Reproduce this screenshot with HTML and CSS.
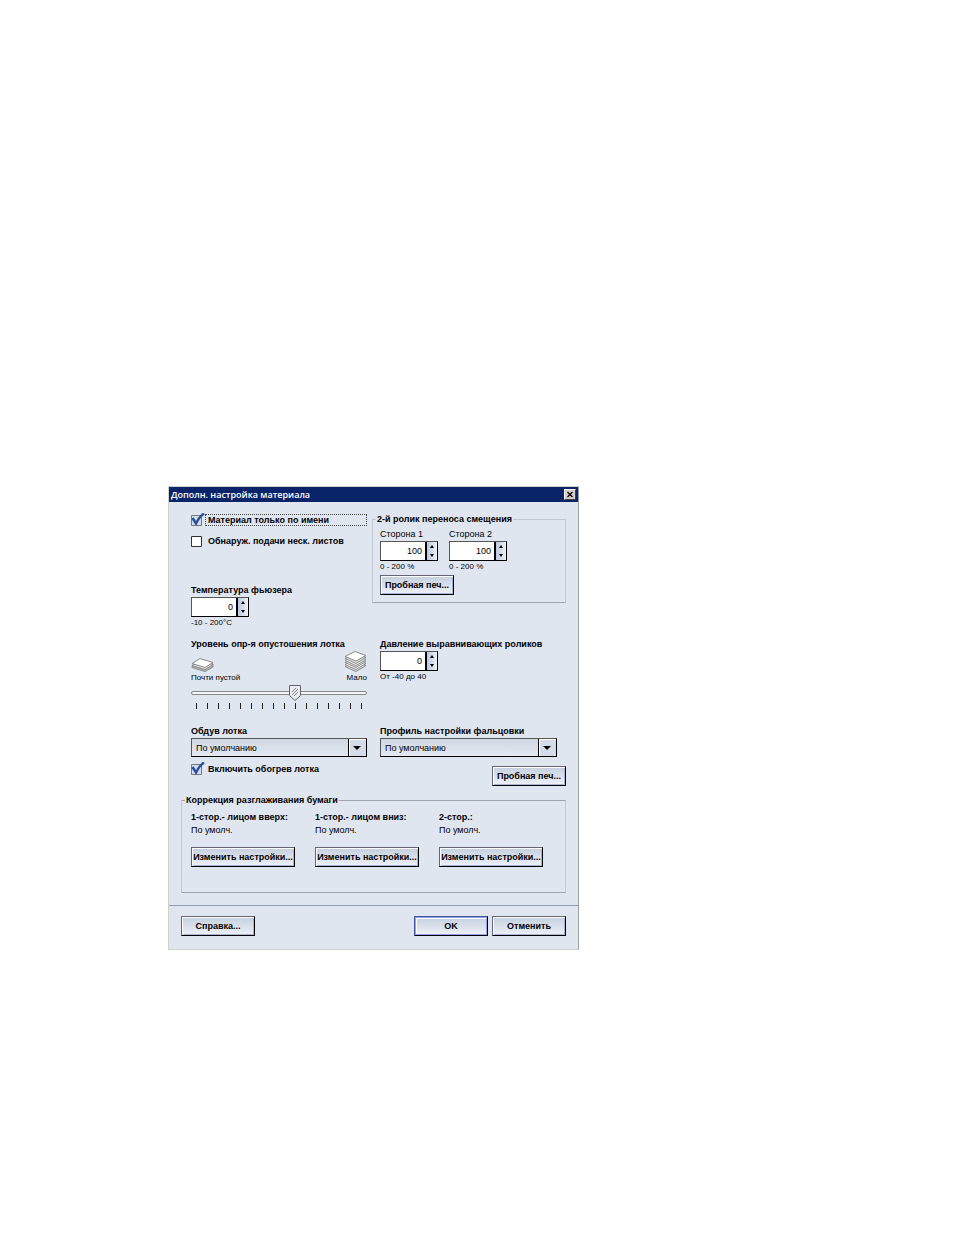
FILE: index.html
```
<!DOCTYPE html>
<html lang="ru">
<head>
    <meta charset="UTF-8">
    <meta name="viewport" content="width=device-width, initial-scale=1.0">
    <title>Дополн. настройка материала</title>
    <link rel="stylesheet" href="styles.css">
</head>
<body>
    <form class="dialog">
        <header class="titlebar">
            <h1 class="title">Дополн. настройка материала</h1>
            <button class="close" type="button" aria-label="Закрыть">
                <svg width="8" height="7" viewBox="0 0 8 7"><path d="M1.500 1L6.500 6M6.500 1L1.500 6" stroke="#000" stroke-width="1.2"/></svg>
            </button>
        </header>

        <main class="content">
            <div class="row">
                <section class="left">
                    <div class="check check-first">
                        <input type="checkbox" id="by-name" checked>
                        <label class="focused" for="by-name">Материал только по имени</label>
                    </div>
                    <div class="check">
                        <input type="checkbox" id="multi-feed">
                        <label for="multi-feed">Обнаруж. подачи неск. листов</label>
                    </div>
                    <div class="field fuser">
                        <label class="label" for="fuser">Температура фьюзера</label>
                        <div class="spinner">
                            <input type="text" id="fuser" value="0">
                            <div class="steps">
                                <button type="button" class="up" aria-label="Больше"></button>
                                <button type="button" class="down" aria-label="Меньше"></button>
                            </div>
                        </div>
                        <span class="hint">-10 - 200°C</span>
                    </div>
                </section>
                <fieldset class="group roller">
                    <legend>2-й ролик переноса смещения</legend>
                    <div class="sides">
                        <div class="field">
                            <label class="label plain" for="side1">Сторона 1</label>
                            <div class="spinner">
                                <input type="text" id="side1" value="100">
                                <div class="steps">
                                    <button type="button" class="up" aria-label="Больше"></button>
                                    <button type="button" class="down" aria-label="Меньше"></button>
                                </div>
                            </div>
                            <span class="hint">0 - 200 %</span>
                        </div>
                        <div class="field">
                            <label class="label plain" for="side2">Сторона 2</label>
                            <div class="spinner">
                                <input type="text" id="side2" value="100">
                                <div class="steps">
                                    <button type="button" class="up" aria-label="Больше"></button>
                                    <button type="button" class="down" aria-label="Меньше"></button>
                                </div>
                            </div>
                            <span class="hint">0 - 200 %</span>
                        </div>
                    </div>
                    <button class="btn" type="button">Пробная печ...</button>
                </fieldset>
            </div>

            <div class="row row-level">
                <section class="left">
                    <label class="label" for="level">Уровень опр-я опустошения лотка</label>
                    <div class="levels">
                        <div class="level">
                            <svg width="23" height="14" viewBox="0 0 23 14" stroke="#888" stroke-width="1" stroke-linejoin="round">
                                <path d="M1 8L8 3L22 6V9L14 13.5L1 9.500Z" fill="#b5b5b5"/>
                                <path d="M1 7.500L9 3L22 6.500L14 11.500Z" fill="#eee"/>
                                <path d="M1 5.500L9 0.500L22 4.500L14 9.500Z" fill="#fff"/>
                            </svg>
                            <span class="hint">Почти пустой</span>
                        </div>
                        <div class="level level-high">
                            <svg width="23" height="21" viewBox="0 0 23 21" stroke="#888" stroke-width="1" stroke-linejoin="round">
                                <path d="M1 15.500L11 10.500L22 14.500L12 20.500Z" fill="#ddd"/>
                                <path d="M1 13.500L11 8.500L22 12.500L12 18.500Z" fill="#fff"/>
                                <path d="M1 11.500L11 6.500L22 10.500L12 16.500Z" fill="#ddd"/>
                                <path d="M1 9.500L11 4.500L22 8.500L12 14.500Z" fill="#fff"/>
                                <path d="M1 7.500L11 2.500L22 6.500L12 12.500Z" fill="#ddd"/>
                                <path d="M1 5.500L11 0.500L22 4.500L12 10Z" fill="#fff"/>
                            </svg>
                            <span class="hint">Мало</span>
                        </div>
                    </div>
                    <input class="slider" type="range" id="level" min="0" max="15" value="9">
                    <div class="ticks">
                        <i></i><i></i><i></i><i></i><i></i><i></i><i></i><i></i>
                        <i></i><i></i><i></i><i></i><i></i><i></i><i></i><i></i>
                    </div>
                </section>
                <section class="right field">
                    <label class="label" for="pressure">Давление выравнивающих роликов</label>
                    <div class="spinner">
                        <input type="text" id="pressure" value="0">
                        <div class="steps">
                            <button type="button" class="up" aria-label="Больше"></button>
                            <button type="button" class="down" aria-label="Меньше"></button>
                        </div>
                    </div>
                    <span class="hint">От -40 до 40</span>
                </section>
            </div>

            <div class="row row-profile">
                <section class="left">
                    <label class="label" for="blower">Обдув лотка</label>
                    <select class="select" id="blower"><option>По умолчанию</option></select>
                    <div class="check check-heat">
                        <input type="checkbox" id="heat" checked>
                        <label for="heat">Включить обогрев лотка</label>
                    </div>
                </section>
                <section class="profile">
                    <div class="right">
                        <label class="label" for="profile">Профиль настройки фальцовки</label>
                        <select class="select" id="profile"><option>По умолчанию</option></select>
                    </div>
                    <button class="btn btn-test" type="button">Пробная печ...</button>
                </section>
            </div>

            <fieldset class="group curl">
                <legend>Коррекция разглаживания бумаги</legend>
                <div class="curl-item">
                    <h2 class="label">1-стор.- лицом вверх:</h2>
                    <p>По умолч.</p>
                    <button class="btn btn-wide" type="button">Изменить настройки...</button>
                </div>
                <div class="curl-item">
                    <h2 class="label">1-стор.- лицом вниз:</h2>
                    <p>По умолч.</p>
                    <button class="btn btn-wide" type="button">Изменить настройки...</button>
                </div>
                <div class="curl-item">
                    <h2 class="label">2-стор.:</h2>
                    <p>По умолч.</p>
                    <button class="btn btn-wide" type="button">Изменить настройки...</button>
                </div>
            </fieldset>
        </main>

        <footer class="footer">
            <button class="btn help" type="button">Справка...</button>
            <button class="btn btn-default" type="submit">OK</button>
            <button class="btn" type="button">Отменить</button>
        </footer>
    </form>
</body>
</html>
```
FILE: styles.css
```
* {
    box-sizing: border-box;
}

body {
    background: #fff;
    color: #000;
    font: 9px/12px "Liberation Sans", Arial, sans-serif;
    margin: 0;
    padding: 486px 375px 40px 168px;
}

button,
input,
select {
    color: inherit;
    font: inherit;
    margin: 0;
}

.dialog {
    background: #e0e6f0;
    border: 1px solid #d4d0c8;
    border-right-color: #a0a0a0;
}

/* title bar */
.titlebar {
    align-items: center;
    background: #0a246a;
    display: flex;
    height: 15px;
    justify-content: space-between;
    padding: 0 2px;
}

.title {
    color: #fff;
    font: 600 9px/15px "Open Sans", Tahoma, sans-serif;
    margin: 0;
}

.close {
    align-items: center;
    background: #d4d0c8;
    border: 1px solid;
    border-color: #fff #404040 #404040 #fff;
    display: flex;
    height: 11px;
    justify-content: center;
    padding: 0;
    width: 12px;
}

/* layout */
.content {
    padding: 11px 12px 12px;
}

.row {
    align-items: start;
    display: grid;
    grid-template-columns: 191px 1fr;
}

.row-level {
    margin-top: 9px;
}

.row-profile {
    margin-top: 16px;
}

.left {
    padding: 0 5px 0 10px;
}

.right {
    padding: 0 9px 0 8px;
}

.label {
    display: block;
    font-size: 9px;
    font-weight: bold;
    line-height: 13px;
    margin: 0;
    white-space: nowrap;
}

.plain {
    font-weight: normal;
}

.hint {
    display: block;
    font-size: 8px;
    line-height: 12px;
}

/* check boxes */
.check {
    align-items: center;
    display: flex;
    font-weight: bold;
    height: 14px;
    margin-top: 7px;
}

.check-first {
    margin-top: 0;
}

.check-heat {
    margin-top: 5px;
}

.check label {
    flex: 1;
    line-height: 12px;
    padding-left: 3px;
    white-space: nowrap;
}

.check .focused {
    outline: 1px dotted #444;
    outline-offset: -1px;
}

.check input {
    appearance: none;
    background: url("data:image/svg+xml,%3Csvg xmlns='http://www.w3.org/2000/svg' width='14' height='14'%3E%3Cpath d='M.5 2.500h10v10H.5z' fill='%23fff' stroke='%23333'/%3E%3C/svg%3E");
    height: 14px;
    width: 14px;
}

.check input:checked {
    background: url("data:image/svg+xml,%3Csvg xmlns='http://www.w3.org/2000/svg' width='14' height='14'%3E%3Cpath d='M.5 2.500h10v10H.5z' fill='%23d5deea' stroke='%23777'/%3E%3Cpath d='M1.500 5L5 10.500Q8 4 13 .5' fill='none' stroke='%232850a0' stroke-width='2.500'/%3E%3C/svg%3E");
}

/* spinners */
.fuser {
    margin-top: 36px;
}

.spinner {
    border: 1px solid #000;
    border-top-color: #555;
    border-left-color: #555;
    display: flex;
    height: 20px;
    width: 58px;
}

.spinner input {
    background: #fff;
    border: 0;
    border-right: 2px solid #000;
    min-width: 0;
    padding: 0 3px;
    text-align: right;
    width: 46px;
}

.steps {
    background: linear-gradient(90deg, #bcc8dc, #eef2f8);
    display: flex;
    flex: 1;
    flex-direction: column;
}

.steps button {
    align-items: center;
    background: none;
    border: 0;
    display: flex;
    flex: 1;
    justify-content: center;
    padding: 0;
}

.steps button::before {
    border: 2px solid transparent;
    content: "";
}

.steps .up::before {
    border-bottom: 3px solid #000;
    border-top: 0;
}

.steps .down::before {
    border-bottom: 0;
    border-top: 3px solid #000;
}

/* groups */
.group {
    border: 1px solid #c4c8d0;
    border-bottom-color: #a0a4ac;
    margin: 0;
    min-width: 0;
}

.group legend {
    font-weight: bold;
    line-height: 12px;
    padding: 0 1px;
    white-space: nowrap;
}

.roller {
    padding: 3px 7px 7px;
}

.roller legend {
    margin-left: -4px;
}

.sides {
    display: flex;
    gap: 11px;
    margin-bottom: 2px;
}

.curl {
    border-top-color: #a0a4ac;
    display: grid;
    grid-template-columns: repeat(3, 124px);
    margin-top: 8px;
    padding: 5px 9px 25px;
}

.curl legend {
    margin-left: -6px;
}

.curl-item p {
    margin: 0 0 11px;
}

/* tray level */
.levels {
    align-items: flex-end;
    display: flex;
    justify-content: space-between;
}

.level svg {
    display: block;
}

.level-high .hint {
    text-align: right;
}

.slider {
    appearance: none;
    background: none;
    display: block;
    height: 18px;
    width: 100%;
}

.slider::-webkit-slider-runnable-track {
    background: #f4f6fa;
    border: 1px solid #888;
    border-radius: 2px;
    height: 4px;
}

.slider::-webkit-slider-thumb {
    appearance: none;
    background: url("data:image/svg+xml,%3Csvg xmlns='http://www.w3.org/2000/svg' width='12' height='16'%3E%3Cpath d='M.5.5h11v10L6 15.500.5 10.500z' fill='%23e8ecf2' stroke='%23666'/%3E%3Cpath d='M3 7l4-4M3 10l6-6M5 11l4-4' stroke='%23888'/%3E%3C/svg%3E");
    height: 16px;
    margin-top: -7px;
    width: 12px;
}

.ticks {
    display: flex;
    justify-content: space-between;
    padding: 1px 5px 0;
}

.ticks i {
    background: #222;
    height: 6px;
    width: 1px;
}

/* drop-downs */
.select {
    appearance: none;
    background:
        url("data:image/svg+xml,%3Csvg xmlns='http://www.w3.org/2000/svg' width='18' height='17'%3E%3Cpath d='M0 0h18v17H0z' fill='%23d4dcea'/%3E%3Cpath d='M.5 0v17' stroke='%23000'/%3E%3Cpath d='M1.500 17V.5H18' fill='none' stroke='%23fff'/%3E%3Cpath d='M5 7h8l-4 4z'/%3E%3C/svg%3E") right top no-repeat,
        linear-gradient(#cfd7e2, #e4e9f2);
    border: 1px solid #000;
    border-left-color: #555;
    border-top-color: #555;
    border-radius: 0;
    display: block;
    height: 19px;
    padding: 0 20px 0 4px;
    width: 100%;
}

/* buttons */
.btn {
    background: linear-gradient(#c4cfde, #eef1f8);
    border: 1px solid #000;
    border-left-color: #667;
    border-top-color: #667;
    box-shadow: inset 1px 1px #fff, inset -1px -1px #a9b4d0;
    font-weight: bold;
    height: 20px;
    padding: 0;
    white-space: nowrap;
    width: 74px;
}

.btn-wide {
    width: 104px;
}

.btn-default {
    border-color: #4455a0 #000 #000 #4455a0;
    box-shadow: inset 0 0 0 1px #93a2e0, inset 2px 2px #fff;
}

.btn-test {
    display: block;
    margin: 9px 0 0 auto;
}

.footer {
    border-top: 1px solid #8d9cb8;
    display: flex;
    gap: 4px;
    padding: 10px 12px 13px;
}

.help {
    margin-right: auto;
}
```
